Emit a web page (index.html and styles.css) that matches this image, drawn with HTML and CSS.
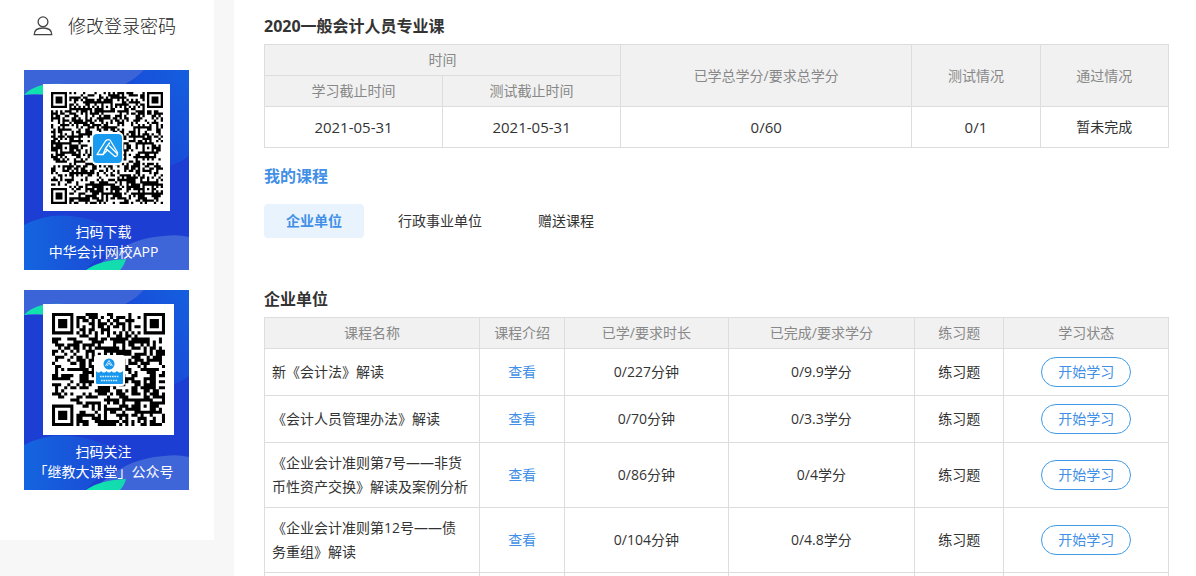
FILE: index.html
```html
<!DOCTYPE html>
<html lang="zh-CN">
<head>
<meta charset="utf-8">
<title>我的课程</title>
<link rel="stylesheet" href="styles.css">
</head>
<body>
<div class="page">
  <aside class="sidebar">
    <a class="account-link" href="#">
      <svg class="user-icon" viewBox="0 0 20 20" aria-hidden="true"><circle cx="10" cy="5.800" r="4.900"/><path d="M1.200 18.700C1.200 14.400 4.800 12 10 12s8.800 2.400 8.800 6.700z"/></svg>
      修改登录密码
    </a>
    <section class="qr-card">
      <svg class="qr-art" viewBox="0 0 165 200" aria-hidden="true">
        <defs>
          <linearGradient id="edge" x1="0" y1="1" x2="1" y2="0"><stop offset="0" stop-color="#1c3fd3"/><stop offset="1" stop-color="#145fdf"/></linearGradient>
          <linearGradient id="wave" x1="0" y1="0" x2="1" y2="0"><stop offset="0" stop-color="#1465df"/><stop offset="1" stop-color="#1d40d2"/></linearGradient>
          <linearGradient id="leaf" x1="0" y1="0" x2="1" y2="0"><stop offset="0" stop-color="#0fe4b0"/><stop offset="1" stop-color="#14d9ae"/></linearGradient>
        </defs>
        <g id="backdrop">
          <rect width="165" height="200" fill="#1c3ed2"/>
          <path d="M0 0H120Q113 8 100 15L60 25H0z" fill="#3c64d9"/>
          <path d="M120 0H165V86Q150 98 130 98L100 15Q113 8 120 0z" fill="url(#edge)"/>
          <path d="M0 25Q12 12 40 14V27Q12 22 0 25z" fill="url(#leaf)"/>
          <path d="M0 155Q22 143 48 146Q88 151 111 174Q75 182 62 200H0z" fill="url(#wave)"/>
          <path d="M70 200Q100 168 140 166Q154 164 165 167V200z" fill="#3e66d9"/>
          <path d="M62 200Q76 190 102 189Q100 196 96 200z" fill="url(#leaf)"/>
        </g>
      </svg>
      <svg class="qr-code qr-code-app" viewBox="0 0 127 127" role="img" aria-label="APP二维码">
        <rect width="127" height="127" fill="#fff"/>
        <path class="modules" data-version="8" data-origin="8" data-size="112" data-seed="41"/>
        <rect x="48.500" y="48" width="32" height="33" rx="5" fill="#fff"/>
        <rect x="50" y="50" width="29" height="29" rx="4" fill="#199bf0"/>
        <g fill="none" stroke="#fff" stroke-width="1.300" stroke-linejoin="round" stroke-linecap="round">
          <path d="M54 70.500L62.500 57Q64 55 67 56L74.500 68.500Q75 72.500 72 72.500L64.500 66L60 70.500z"/>
          <path d="M60 70.500L62.500 64.500L66.500 59M62.500 64.500L64.500 66M66.500 62L74 69.500"/>
        </g>
      </svg>
      <p class="qr-caption">扫码下载<br>中华会计网校APP</p>
    </section>
    <section class="qr-card">
      <svg class="qr-art" viewBox="0 0 165 200" aria-hidden="true"><use href="#backdrop"/></svg>
      <svg class="qr-code qr-code-wechat" viewBox="0 0 131 131" role="img" aria-label="公众号二维码">
        <rect width="131" height="131" fill="#fff"/>
        <path class="modules" data-version="5" data-origin="9" data-size="113" data-seed="93"/>
        <rect x="51" y="51" width="31" height="31" rx="3" fill="#fff"/>
        <circle cx="66" cy="60" r="5.500" fill="#1997ed"/>
        <path d="M62.500 62L66 56.500L69.500 62M64 62L66 59L68 62" fill="none" stroke="#fff" stroke-width=".8"/>
        <path d="M53 67Q55.500 70 58 67Q61 70 63.500 67Q66 70 68.500 67Q71 70 74 67Q76.500 70 80 67V79Q80 80 79 80H54Q53 80 53 79z" fill="#1997ed"/>
        <path d="M57 72.500H76M58 76.500H75" fill="none" stroke="#d9efff" stroke-width="1.400" stroke-dasharray="1.600 .8"/>
      </svg>
      <p class="qr-caption">扫码关注<br>「继教大课堂」公众号</p>
    </section>
  </aside>

  <main class="content">
    <h1 class="title">2020一般会计人员专业课</h1>
    <table class="grid summary">
      <colgroup><col class="s-date"><col class="s-date"><col class="s-credit"><col class="s-state"><col class="s-state"></colgroup>
      <thead>
        <tr><th colspan="2">时间</th><th rowspan="2">已学总学分/要求总学分</th><th rowspan="2">测试情况</th><th rowspan="2">通过情况</th></tr>
        <tr><th>学习截止时间</th><th>测试截止时间</th></tr>
      </thead>
      <tbody>
        <tr class="figures"><td>2021-05-31</td><td>2021-05-31</td><td>0/60</td><td>0/1</td><td class="result">暂未完成</td></tr>
      </tbody>
    </table>

    <h2 class="title section-title">我的课程</h2>
    <nav class="tabs">
      <button class="tab active" type="button">企业单位</button>
      <button class="tab" type="button">行政事业单位</button>
      <button class="tab" type="button">赠送课程</button>
    </nav>

    <h2 class="title">企业单位</h2>
    <table class="grid courses">
      <colgroup><col class="c-name"><col class="c-intro"><col class="c-time"><col class="c-credit"><col class="c-quiz"><col class="c-state"></colgroup>
      <thead>
        <tr><th>课程名称</th><th>课程介绍</th><th>已学/要求时长</th><th>已完成/要求学分</th><th>练习题</th><th>学习状态</th></tr>
      </thead>
      <tbody>
        <tr><td class="name">新《会计法》解读</td><td><a class="view" href="#">查看</a></td><td>0/227分钟</td><td>0/9.9学分</td><td>练习题</td><td><button class="start" type="button">开始学习</button></td></tr>
        <tr><td class="name">《会计人员管理办法》解读</td><td><a class="view" href="#">查看</a></td><td>0/70分钟</td><td>0/3.3学分</td><td>练习题</td><td><button class="start" type="button">开始学习</button></td></tr>
        <tr><td class="name">《企业会计准则第7号——非货币性资产交换》解读及案例分析</td><td><a class="view" href="#">查看</a></td><td>0/86分钟</td><td>0/4学分</td><td>练习题</td><td><button class="start" type="button">开始学习</button></td></tr>
        <tr><td class="name">《企业会计准则第12号——债务重组》解读</td><td><a class="view" href="#">查看</a></td><td>0/104分钟</td><td>0/4.8学分</td><td>练习题</td><td><button class="start" type="button">开始学习</button></td></tr>
        <tr><td></td><td></td><td></td><td></td><td></td><td></td></tr>
      </tbody>
    </table>
  </main>
</div>
<script src="qr.js"></script>
</body>
</html>
```
FILE: styles.css
```css
* { box-sizing: border-box; }

body {
  margin: 0;
  background: #f7f7f7;
  color: #333;
  font: 14px/24px "Open Sans", "Noto Sans CJK SC", sans-serif;
}

button { font: inherit; cursor: pointer; }
a { text-decoration: none; }

.page {
  display: flex;
  align-items: flex-start;
  gap: 20px;
  height: 100vh;
  overflow: hidden;
}

/* Sidebar */
.sidebar {
  flex: 0 0 214px;
  display: flex;
  flex-direction: column;
  gap: 20px;
  padding: 14px 25px 50px 24px;
  background: #fff;
}

.account-link {
  display: flex;
  align-items: center;
  gap: 15px;
  margin-bottom: 12px;
  padding-left: 9px;
  color: #222;
  font-size: 18px;
  font-weight: 300;
}

.user-icon {
  width: 20px;
  height: 20px;
  fill: none;
  stroke: #444;
  stroke-width: 1.3;
}

.qr-card {
  position: relative;
  display: flex;
  flex-direction: column;
  justify-content: space-between;
  height: 200px;
  padding: 14px 0 8px;
  color: #fff;
}

.qr-art {
  position: absolute;
  inset: 0;
  width: 100%;
  height: 100%;
}

.qr-code {
  position: relative;
  margin-left: 19px;
}

.qr-code-app { width: 127px; }
.qr-code-wechat { width: 131px; }

.qr-caption {
  position: relative;
  margin: 0;
  padding-right: 6px;
  line-height: 20px;
  text-align: center;
  white-space: nowrap;
}

/* Content */
.content {
  flex: 1;
  min-width: 0;
  min-height: 100vh;
  padding: 14px 27px 0 30px;
  background: #fff;
}

.title {
  margin: 0 0 6px;
  font-size: 16px;
  line-height: 24px;
  font-weight: 700;
}

.section-title {
  margin: 16px 0;
  color: #418fe6;
}

.grid {
  width: 100%;
  table-layout: fixed;
  border-collapse: collapse;
}

.grid th,
.grid td {
  padding: 8px 0;
  border: 1px solid #ddd;
  text-align: center;
}

.grid th {
  padding: 3px 0;
  background: #f1f1f1;
  color: #888;
  font-weight: 400;
}

.figures { font-size: 15px; }
.figures .result { font-size: 14px; }

.s-date { width: 19.7%; }
.s-credit { width: 32.2%; }
.s-state { width: 14.2%; }

.c-name { width: 23.8%; }
.c-intro { width: 9.4%; }
.c-time { width: 18.1%; }
.c-credit { width: 20.6%; }
.c-quiz { width: 9.9%; }
.c-state { width: 18.2%; }

.grid .name {
  padding: 8px 10px 8px 7px;
  text-align: left;
}

.view { color: #418fe6; }

.start {
  display: block;
  width: 90px;
  height: 30px;
  margin: 0 auto;
  padding: 0;
  border: 1px solid #3f9be8;
  border-radius: 15px;
  background: #fff;
  color: #418fe6;
}

.tabs {
  display: flex;
  gap: 12px;
  margin-bottom: 49px;
}

.tab {
  height: 34px;
  padding: 0 22px;
  border: 0;
  border-radius: 4px;
  background: none;
  color: #333;
}

.tab.active {
  background: #e8f3fe;
  color: #418fe6;
  font-weight: 700;
}
```
FILE: qr.js
```javascript
// Fills each .modules path with a QR-style module grid.
const alignmentCentres = { 5: [6, 30], 8: [6, 24, 42] };

function square(x, y, cx, cy, radius) {
  const distance = Math.max(Math.abs(x - cx), Math.abs(y - cy));
  return distance > radius ? null : distance;
}

function moduleAt(x, y, count, centres, random) {
  const noise = random() < 0.53;
  for (const [cx, cy] of [[3, 3], [count - 4, 3], [3, count - 4]]) {
    const d = square(x, y, cx, cy, 4);
    if (d !== null) return d !== 2 && d !== 4;
  }
  for (const cx of centres) {
    for (const cy of centres) {
      if ((cx === 6 && (cy === 6 || cy > count - 9)) || (cy === 6 && cx > count - 9)) continue;
      const d = square(x, y, cx, cy, 2);
      if (d !== null) return d !== 1;
    }
  }
  if (x === 6 || y === 6) return (x + y) % 2 === 0;
  return noise;
}

document.querySelectorAll(".modules").forEach((path) => {
  const version = Number(path.dataset.version);
  const origin = Number(path.dataset.origin);
  const count = 17 + version * 4;
  const unit = Number(path.dataset.size) / count;
  let state = Number(path.dataset.seed);
  const random = () => {
    state = (state * 1664525 + 1013904223) % 4294967296;
    return state / 4294967296;
  };
  let d = "";
  for (let y = 0; y < count; y++) {
    let start = -1;
    for (let x = 0; x <= count; x++) {
      const dark = x < count && moduleAt(x, y, count, alignmentCentres[version], random);
      if (dark && start < 0) start = x;
      if (!dark && start >= 0) {
        d += `M${origin + start * unit} ${origin + y * unit}h${(x - start) * unit}v${unit}h${(start - x) * unit}z`;
        start = -1;
      }
    }
  }
  path.setAttribute("d", d);
});
```
